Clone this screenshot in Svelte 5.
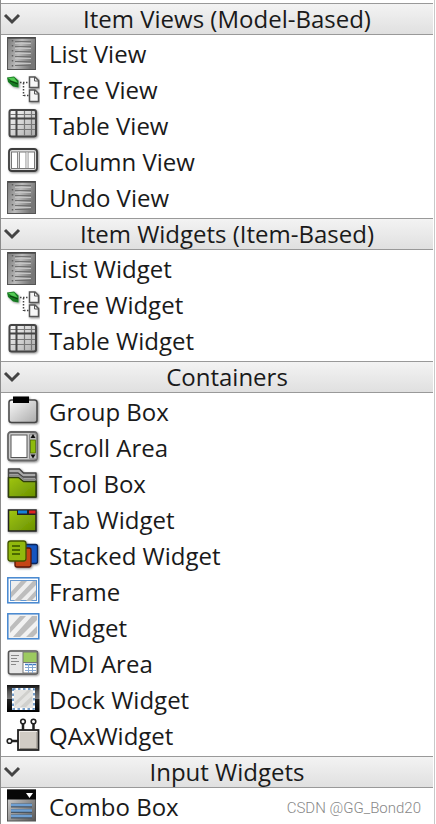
<script>
  const groups = [
    {
      title: 'Item Views (Model-Based)',
      items: [
        ['List View', 'list'],
        ['Tree View', 'tree'],
        ['Table View', 'table'],
        ['Column View', 'column'],
        ['Undo View', 'list']
      ]
    },
    {
      title: 'Item Widgets (Item-Based)',
      items: [
        ['List Widget', 'list'],
        ['Tree Widget', 'tree'],
        ['Table Widget', 'table']
      ]
    },
    {
      title: 'Containers',
      items: [
        ['Group Box', 'group'],
        ['Scroll Area', 'scroll'],
        ['Tool Box', 'toolbox'],
        ['Tab Widget', 'tab'],
        ['Stacked Widget', 'stacked'],
        ['Frame', 'frame'],
        ['Widget', 'widget'],
        ['MDI Area', 'mdi'],
        ['Dock Widget', 'dock'],
        ['QAxWidget', 'qax']
      ]
    },
    { title: 'Input Widgets', items: [['Combo Box', 'combo']] }
  ];
  let open = $state(groups.map(() => true));
</script>

<svg class="defs" width="0" height="0" aria-hidden="true">
  <defs>
    <linearGradient id="steel" x1="0" y1="0" x2="1" y2="0.3">
      <stop offset="0" stop-color="#777" /><stop offset="0.5" stop-color="#bbb" /><stop offset="1" stop-color="#777" />
    </linearGradient>
    <linearGradient id="silver" x1="0" y1="0" x2="1" y2="1">
      <stop offset="0" stop-color="#fafafa" /><stop offset="1" stop-color="#aaa" />
    </linearGradient>
    <linearGradient id="green" x1="0" y1="0" x2="1" y2="1">
      <stop offset="0" stop-color="#a0c614" /><stop offset="1" stop-color="#699000" />
    </linearGradient>
    <linearGradient id="night" x1="0" y1="0" x2="0" y2="1">
      <stop offset="0" stop-color="#111" /><stop offset="0.25" stop-color="#555" /><stop offset="0.5" stop-color="#777" /><stop offset="0.52" stop-color="#222" /><stop offset="1" stop-color="#000" />
    </linearGradient>
    <linearGradient id="combo" x1="0" y1="0" x2="1" y2="1">
      <stop offset="0" stop-color="#ddd" /><stop offset="1" stop-color="#555" />
    </linearGradient>
    <filter id="shadow" x="-20%" y="-20%" width="150%" height="150%">
      <feDropShadow dx="1" dy="1" stdDeviation="1" flood-opacity="0.45" />
    </filter>
  </defs>
</svg>

{#snippet stripes()}
  <path d="M7 18 17 7h6L7 24zM10 27 29 7h3v4L16 27zM22 27l10-11v6l-5 5z" fill="#bdbdbd" />
{/snippet}

{#snippet icon(kind)}
  <svg class="icon" viewBox="0 0 36 36" width="36" height="36" aria-hidden="true">
    {#if kind === 'list'}
      <rect x="3.5" y="1.5" width="28" height="32" fill="url(#steel)" stroke="#555" />
      <path d="M4 2h27" stroke="#444" stroke-width="1.4" />
      <path d="M11 5.5h16M11 10.5h16M11 15.5h16M11 20.5h16M11 25.5h16M11 29.5h16" stroke="#707070" stroke-width="1.2" />
      <path d="M11 7.5h16M11 12.5h16M11 17.5h16M11 22.5h16M11 27.5h16" stroke="#c4c4c4" stroke-width="1" />
      <path d="M8.500 4v27" stroke="#606060" stroke-width="1.5" stroke-dasharray="1.5 3.5" />
    {:else if kind === 'tree'}
      <g filter="url(#shadow)">
        <path d="M3 5.500 10 4.500 14.500 8.500V15.500L9 14.500 4 10z" fill="#187a22" />
        <path d="M4 6l6-.5 3.500 5-6-2z" fill="#54cb54" />
        <path d="m6 9 8 3" stroke="#063d0a" />
      </g>
      <path d="M16 10.500h9M19.500 11v13M20 23.500h5" fill="none" stroke="#444" stroke-width="1.5" stroke-dasharray="1.5 1.500" />
      <g fill="#f6f6f6" stroke="#555" stroke-width="1.5" filter="url(#shadow)">
        <path d="M25.500 5h5.500l3.500 3.500v7h-9zM25.500 18h5.500l3.500 3.500v8h-9z" />
        <path d="M30.500 5v4h4M30.500 18v4h4" fill="none" stroke-width="1" />
      </g>
    {:else if kind === 'table'}
      <g filter="url(#shadow)">
        <rect x="5.500" y="2" width="26.500" height="26.500" rx="2" fill="url(#silver)" stroke="#444" stroke-width="2" />
        <path d="M6 6.500h25M6 16.500h25M6 21.500h25M20.500 3v25M27.500 3v25" stroke="#777" stroke-width="1.2" />
        <path d="M6 10.500h25M12.500 3v25" stroke="#444" stroke-width="2" />
      </g>
    {:else if kind === 'column'}
      <g filter="url(#shadow)">
        <rect x="5" y="5" width="28" height="22" rx="3" fill="#ddd" stroke="#3c3c3c" stroke-width="1.800" />
        <rect x="7.500" y="8" width="23" height="16.500" fill="#fff" stroke="#777" />
        <path d="M13.500 8v16M15.500 8v16M22 8v16M24 8v16" stroke="#888" />
        <path d="M14.500 8v16M23 8v16" stroke="#ddd" />
      </g>
    {:else if kind === 'group'}
      <g filter="url(#shadow)">
        <rect x="5" y="6" width="28" height="22.500" rx="2.500" fill="url(#silver)" stroke="#444" stroke-width="1.500" />
        <rect x="9" y="2.500" width="16" height="6.500" fill="#000" />
      </g>
    {:else if kind === 'scroll'}
      <g filter="url(#shadow)">
        <rect x="4" y="2" width="29" height="28.500" rx="3" fill="#ccc" stroke="#666" stroke-width="1.800" />
        <rect x="7" y="5" width="16" height="22.500" fill="#fff" stroke="#555" />
        <rect x="25.500" y="4" width="7" height="25" rx="1" fill="#bbb" stroke="#888" />
        <rect x="26.500" y="10" width="5" height="13" fill="#8ebb08" stroke="#456300" stroke-width="0.700" />
        <path d="m29 4 2.500 4h-5zM29 28.500l2.500-4h-5z" fill="#111" />
      </g>
    {:else if kind === 'toolbox'}
      <g filter="url(#shadow)" stroke-linejoin="round">
        <path d="M4.500 3h11l4 4H32v24H4.500z" fill="#aaa" stroke="#444" stroke-width="1.500" />
        <path d="M5 7h9l5 4h13" fill="none" stroke="#444" stroke-width="1.500" />
        <path d="M4.500 11.500h10l5 4H32V31H4.500z" fill="url(#green)" stroke="#2e3c08" stroke-width="1.500" />
        <path d="M5 9.500h10l5 4h12" fill="none" stroke="#888" stroke-width="1.500" />
      </g>
    {:else if kind === 'tab'}
      <g filter="url(#shadow)">
        <path d="M4.500 8H32v21H4.500z" fill="url(#green)" stroke="#222" stroke-width="1.500" />
        <path d="M13 8h19v5H13z" fill="#222" />
        <path d="M14 8.500h9v3h-9z" fill="#1482da" />
        <path d="M25 8.500h6.500v3H25z" fill="#e02020" />
      </g>
    {:else if kind === 'stacked'}
      <g filter="url(#shadow)" stroke-width="1.300">
        <rect x="18" y="6.500" width="15.500" height="19" rx="2" fill="#1455c0" stroke="#09265c" />
        <rect x="11" y="10" width="16" height="19" rx="2" fill="#c54419" stroke="#5a1606" />
        <rect x="4" y="3" width="18" height="20" rx="2.500" fill="#91b80b" stroke="#405400" />
        <path d="M8 8h8M8 12h8M8 16h8" stroke="#345000" stroke-width="1.500" />
      </g>
    {:else if kind === 'frame'}
      <rect x="3.800" y="3.800" width="31" height="25" fill="#fff" stroke="#4486cf" stroke-width="1.500" />
      <rect x="6.500" y="6.500" width="26" height="20" fill="#eee" stroke="#6698cf" />
      {@render stripes()}
    {:else if kind === 'widget'}
      <rect x="3.800" y="3.800" width="31" height="25" fill="#f2f2f2" stroke="#4486cf" stroke-width="1.500" />
      <path d="M6 17 16 6h6L6 23zM9 27 28 6h5v4L16 27zM22 27l11-11v7l-4 4z" fill="#bdbdbd" />
    {:else if kind === 'mdi'}
      <g filter="url(#shadow)">
        <rect x="4.500" y="5" width="29" height="23" rx="2" fill="#e6e6e6" stroke="#555" stroke-width="1.600" />
        <path d="M19 6h14v10.500H19z" fill="#9cca61" stroke="#777" />
        <path d="M19 16.500h14V27H19z" fill="#fff" stroke="#777" />
        <path d="M7 9.500h8M7 12.500h6M7 15.500h8M7 18.500h5" stroke="#888" />
        <path d="M21 18.500h11" stroke="#3d7bc5" stroke-width="1.500" />
        <path d="M21 21.500h11M21 24.500h11M24.500 18v9M28.500 18v9" stroke="#86a9d3" />
      </g>
    {:else if kind === 'dock'}
      <path d="M3 3h32.500v27H3z" fill="url(#night)" />
      <rect x="9" y="7" width="21" height="20" fill="#e4e4e2" stroke="#fff" stroke-width="2" />
      <path d="M11 20 24 8h4L11 24zM16 25 28 14v5l-6 6z" fill="#d0d0cd" />
      <rect x="9" y="7" width="21" height="20" fill="none" stroke="#477eb8" stroke-width="1.500" stroke-dasharray="2.500 2.500" />
    {:else if kind === 'qax'}
      <path d="M8 23h6M19 6v6M29.500 6v6" stroke="#222" stroke-width="2.500" />
      <g fill="#fff" stroke="#222" stroke-width="1.600">
        <circle cx="5.500" cy="23" r="2.300" /><circle cx="19" cy="3.500" r="2.300" /><circle cx="29.500" cy="3.500" r="2.300" />
      </g>
      <rect x="14" y="12" width="20.500" height="20" fill="#d1ccc4" stroke="#222" stroke-width="1.800" />
      <path d="M15.500 30V13.500H33" fill="none" stroke="#eeeae5" />
      <path d="M16 30.500h17V14" fill="none" stroke="#8c8880" />
    {:else if kind === 'combo'}
      <rect x="3.500" y="1" width="28" height="31" fill="url(#combo)" stroke="#555" />
      <path d="M3 .5h29v10H3z" fill="#080808" />
      <path d="M22 4h7l-3.500 5z" fill="#fff" />
      <path d="M7 16.500h21M7 22h21M7 27.500h21" stroke="#475563" stroke-width="4" />
      <path d="M7 16h21M7 21.500h21M7 27h21" stroke="#6e9fd2" stroke-width="2.500" />
    {/if}
  </svg>
{/snippet}

<main class="panel">
  {#each groups as group, i}
    <section>
      <button class="header" aria-expanded={open[i]} onclick={() => (open[i] = !open[i])}>
        <svg class="chevron" class:closed={!open[i]} viewBox="0 0 18 12" width="18" height="12" aria-hidden="true">
          <path d="m2 2 7 7 7-7" fill="none" stroke="#444" stroke-width="3" />
        </svg>
        <span>{group.title}</span>
      </button>
      {#if open[i]}
        <ul>
          {#each group.items as [label, kind]}
            <li>{@render icon(kind)}<span>{label}</span></li>
          {/each}
        </ul>
      {/if}
    </section>
  {/each}
  <small class="credit">CSDN @GG_Bond20</small>
</main>

<style>
  :global(body) {
    margin: 0;
    background: #fff;
  }
  .defs {
    position: absolute;
  }
  .panel {
    position: relative;
    box-sizing: border-box;
    height: 100vh;
    overflow: hidden;
    margin-right: 1px;
    padding: 3px 1px 0 0;
    border-left: 1px solid #8c8c8c;
    border-right: 1px solid #c8c8c8;
    font-family: 'Open Sans', 'Noto Sans', sans-serif;
    font-size: 24px;
    color: #1a1a1a;
  }
  .header {
    display: flex;
    align-items: center;
    box-sizing: border-box;
    width: 100%;
    height: 32px;
    margin: 0;
    padding: 0 0 0 2px;
    border: 0 solid #999;
    border-width: 1px 0;
    background: linear-gradient(#f3f3f3, #e0e0e0);
    font: inherit;
    line-height: 30px;
    color: inherit;
  }
  .header span {
    flex: 1;
    text-align: center;
  }
  .chevron.closed {
    transform: rotate(-90deg);
  }
  ul {
    margin: 0;
    padding: 1px 0 2px 3px;
    list-style: none;
  }
  li {
    display: flex;
    align-items: center;
    gap: 9px;
    height: 36px;
    line-height: 36px;
    white-space: nowrap;
  }
  .icon {
    flex: none;
  }
  .credit {
    position: absolute;
    right: 13px;
    bottom: 6px;
    font-family: Roboto, sans-serif;
    font-size: 15px;
    font-weight: 300;
    line-height: 20px;
    color: #888;
  }
</style>
